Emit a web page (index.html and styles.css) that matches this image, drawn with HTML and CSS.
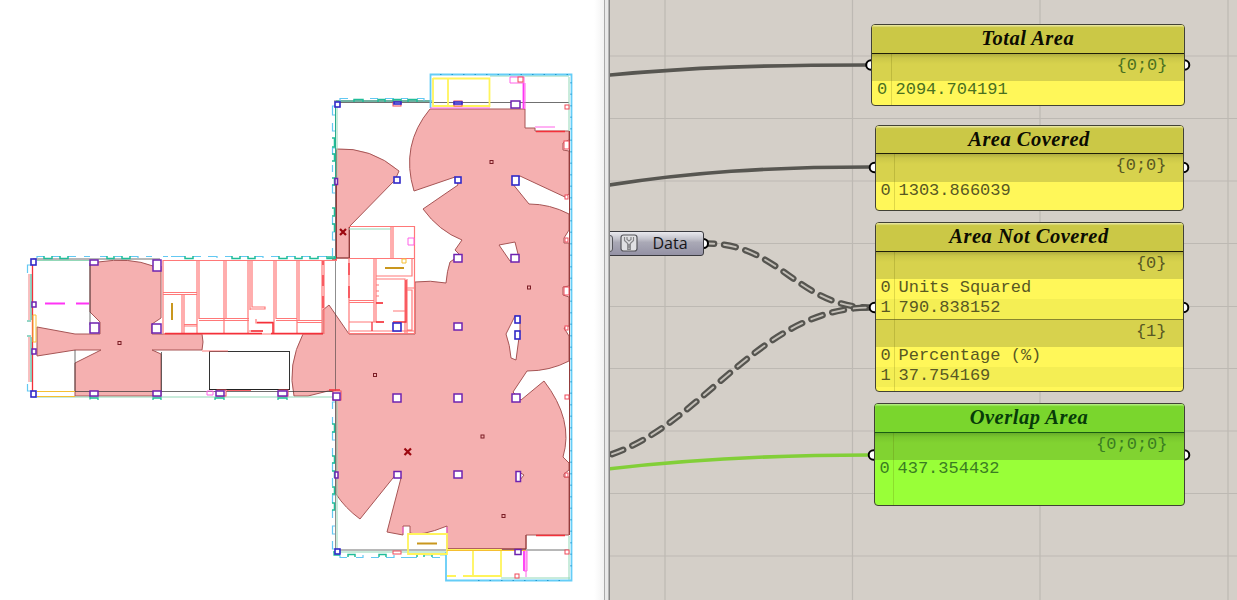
FILE: index.html
```html
<!DOCTYPE html>
<html lang="en">
<head>
<meta charset="utf-8">
<title>Area coverage</title>
<link rel="stylesheet" href="styles.css">
</head>
<body>
<main class="workspace">
<section class="plan">
<svg class="plan-drawing" viewBox="0 0 604 600" width="604" height="600">
  <!-- covered areas -->
  <g class="cover">
    <path d="M90 265L98 262Q130 257 153 266L161 266V318L152 324V334H202Q204 342 202 350H152L161 354V396H75V363L101 350H75L37 356V327L75 334H100V322L90 312Z"/>
    <path d="M336 149Q371 147 399 171L395 180L349 227V258H336Z"/>
    <path d="M303 334H323V310L329 305L349 334H415V282Q430 280 446 283Q447 271 450 262L460 255L455 250L462 240Q439 231 423 209L458 185L455 177L414 191Q400 145 430 109H525V128H535V131H569V140L563 143V150L569 151V194L565 197L520 176L512 183L529 204Q550 204 569 214V230L564 238V243H569V286L563 287V295L569 297V326L564 328L569 336V361Q550 371 527 371L513 392L521 400L544 381Q574 420 563 457L569 463V470L564 474V477H569V535H526V549H447V526Q420 537 410 533V526H403V535L387 532L401 478L397 473L360 519Q345 508 336 494V391H328L308 396H294Q287 365 303 334Z"/>
  </g>
  <g class="gap">
    <path d="M499 245L515 242L519 258L510 261Z"/>
    <path d="M515 316L506 334Q510 345 511 358L516 360L520 330V316Z"/>
    <path d="M519 472L524 475L520 480Z"/>
  </g>

  <!-- grid lines and walls -->
  <g class="wall-black">
    <path d="M336 102.500H569M75 391.500H336M336 550H569" opacity=".7"/>
    <path d="M335.500 103V551" opacity=".55"/>
    <path d="M90 263V325M75 350V391M161.500 352V391M33 259H160M334 101H430" opacity=".7"/>
    <rect x="209.500" y="351.500" width="80" height="38"/>
  </g>
  <g class="wall-maroon">
    <path d="M336.500 150V258M349.500 227V258M447 549H526M526 549V535M334 258H349M569.500 131V535"/>
  </g>
  <g class="wall-red">
    <path d="M163 260.500H337M163 334H323M163 260V333M197 260V333M199 260V319M224 260V333M226 260V319M248 260V333M250 260V310M252 260V307H265V309H250M274 260V333M276 260V319M297 260V333M299 260V320M322 260V334M324 260V334"/>
    <path d="M163 292.500H197M163 294.500H197M182 294V333M184 294V333M184 324.500H197M184 326H197M199 318.500H249M199 320.500H249M276 318.500H297M276 320.500H297M297 320.500H322M297 322.500H322M202 351H228M249 331H263M256 319V323H273V333"/>
    <path d="M349 226.500H414.500V333.500H349V258M391 227V258M393 227V258M349 258.500H414M376 258V276H412V259M374 258V322M376 276V322M376 279H405V333M407 279V333M407 288H414M407 290H412V330H407M349 300.500H374M349 302.500H374M349 322H384M376 285H379M376 291H379M376 296H379M376 303H383M393 311H405M350 331H414"/>
  </g>
  <g class="wall-strong">
    <path d="M165 333.500H262M271 333.500H323M323 261V265M323 275V286M323 296V308M349 263V275M349 286V298M406 280V322H393M372 322V331M332 259H337M257 322.500H273V334M536 131.500H565M536 535.500H565M32.500 262V392M227 390H251M329 390H340M376 303H383M376 322H384M251 331H263"/>
  </g>
  <path class="furniture-black" d="M209 389.500H290"/>
  <g class="line-green">
    <path d="M33 397H335M37 260.500H90M349 229H391M337 103V180M337 395V551M333 552H447M569 77V131M569 536V580M490 76H569M501 578H570"/>
    <path class="wall-pink" d="M29 274V320M29 337V382"/>
    <path class="line-teal" d="M31 274V320M31 337V382M27 321H31M27 336H31"/>
  </g>
  <path class="line-teal" d="M336 101H433M335.500 103V180"/>

  <!-- facade panels -->
  <g class="facade-cyan">
    <path d="M37 258V256.500H44M52 256.500H60M68 256.500H76M84 256.500H90M100 256.500H107M115 256.500H122M130 256.500H138V258M146 256.500H152M163 256.500H168M171 256.500H185M193 256.500H201M208 256.500H217V258M225 256.500H232M240 256.500H248M255 256.500H263V258M271 256.500H279M287 256.500H295M302 256.500H310M318 256.500H327"/>
    <path d="M340 101V98.500H348M370 98.500H378M385 98.500H394M401 98.500H408M417 98.500H424V101"/>
    <path d="M335 106H332.500V115H335M332.500 123V131H335M335 148H332.500V154H335M332.500 165V172M335 185H332.500V193H335M332.500 217V224H335M335 232H332.500V240H335M332.500 248V256"/>
    <path d="M335 402H332.500V409M332.500 417V424M335 432H332.500V440H335M332.500 448V456M335 463H332.500V471M332.500 478V486M335 495H332.500V503M332.500 510V518M335 526H332.500V534H335M332.500 541V549H335"/>
    <path d="M340 555V557.500H347M356 557.500H363V555M371 557.500H379M386 557.500H394V555M401 557.500H417M432 557.500H440"/>
    <path d="M31 265H27.500V273M27.500 384V391H31"/>
  </g>
  <g class="facade-teal">
    <path d="M44 256V258.500H52V256M60 256V258.500H68V256M107 256V258.500H114V256M122 256V258.500H130V256M185 256V258.500H193V256M232 256V258.500H240V256M248 256V258.500H255V256M279 256V258.500H287V256M295 256V258.500H302V256M310 256V258.500H318V256M327 256V258.500H335V256"/>
    <path d="M354 102V99.500H363V102M378 102V99.500H385V102M393 102V99.500H401V102M408 102V99.500H417V102"/>
    <path d="M332 138H334.500V147H332M332 154H334.500V161H332M332 178H334.500V185H332M332 208H334.500V216H332M332 224H334.500V232"/>
    <path d="M332 424H334.500V432H332M332 456H334.500V463H332M332 471H334.500V478M332 487H334.500V494H332M332 503H334.500V510H332"/>
    <path d="M348 557V554.500H355V557M379 557V554.500H386V557M417 554.500V557M424 557V554.500H432V557M440 554.500H446"/>
  </g>
  <g class="corner-teal">
    <path d="M90 399.500V396M90 398H98V400M153 400V398H161V400M215 400V398H224V400M278 400V398H287V400M328 257H335V259M334 551V555H340"/>
  </g>
  <path class="frame-cyan" d="M430.500 108V74.500H571.500V580.500H446V552"/>
  <path class="frame-ticks" d="M571 82V575M440 74.500H568M478 580.500H568"/>

  <g class="line-yellow">
    <path d="M433 78.500H489.500V106H433V78M448 78V106M408 534H447V554H408ZM447 550H501V576H463M473 551V576M447 576H456"/>
  </g>
  <g class="line-gold">
    <path d="M37 391.500H75M37 396.500H75M33 315V342H36V315ZM402 259H406V263H402ZM447 550.500H526"/>
    <path class="gold-bar" d="M172 303V320M385 268H404M417 543.500H437"/>
  </g>
  <g class="line-magenta">
    <path class="magenta-bar" d="M45 303.500H65M76 303.500H89M523.500 83V109M524 551V571"/>
    <path d="M510 77V83H524V77ZM524 571H527V551M525 83V109M408 238H414V245H408ZM430 108H490M535 127H555M447 527V533M207 391H213V395H207ZM403 527V533M526 550V577"/>
  </g>

  <!-- columns -->
  <g class="col-red">
    <rect x="393" y="102" width="8" height="4"/><rect x="454" y="101" width="8" height="5"/><rect x="393" y="551" width="8" height="3"/>
    <rect x="515" y="574" width="4" height="4"/><rect x="518" y="77" width="5" height="5"/>
    <rect x="565" y="105" width="4" height="4"/><rect x="564" y="141" width="5" height="8"/><rect x="565" y="195" width="3" height="4"/>
    <rect x="565" y="238" width="3" height="4"/><rect x="564" y="287" width="5" height="8"/><rect x="565" y="326" width="3" height="4"/>
    <rect x="565" y="395" width="4" height="4"/><rect x="565" y="473" width="3" height="4"/><rect x="565" y="550" width="4" height="4"/>
    <rect x="217" y="390" width="9" height="6"/><rect x="279" y="390" width="9" height="6"/><rect x="333" y="391" width="8" height="9"/>
  </g>
  <g class="col-blue">
    <rect x="31" y="259" width="5" height="6"/><rect x="31" y="391" width="5" height="6"/>
    <rect x="335" y="102" width="5" height="5"/><rect x="335" y="549" width="5" height="5"/>
    <rect x="394" y="177" width="6" height="6"/><rect x="455" y="177" width="6" height="6"/><rect x="512" y="176" width="7" height="9"/>
    <rect x="393" y="323" width="8" height="8"/><rect x="515" y="316" width="5" height="7"/><rect x="515" y="331" width="5" height="8"/>
    <rect x="454" y="102" width="8" height="2"/><rect x="394" y="102" width="7" height="2"/>
  </g>
  <g class="col-purple">
    <rect x="90" y="260" width="8" height="5"/><rect x="153" y="260" width="8" height="11"/>
    <rect x="90" y="323" width="9" height="10"/><rect x="152" y="324" width="9" height="9"/>
    <rect x="32" y="302" width="4" height="5"/><rect x="32" y="349" width="4" height="5"/>
    <rect x="90" y="391" width="8" height="5"/><rect x="153" y="391" width="8" height="5"/>
    <rect x="216" y="391" width="8" height="5"/><rect x="278" y="391" width="9" height="5"/>
    <rect x="333" y="393" width="7" height="7"/>
    <rect x="454" y="254.500" width="8" height="7.500"/><rect x="511" y="254.500" width="8" height="7.500"/>
    <rect x="454" y="323" width="8" height="7"/><rect x="393" y="394" width="8" height="8"/>
    <rect x="454" y="394" width="8" height="8"/><rect x="512" y="394" width="8" height="8"/>
    <rect x="394" y="471.500" width="7" height="6.500"/><rect x="454" y="471" width="8" height="7"/><rect x="516" y="471.500" width="4.500" height="10"/>
    <rect x="511" y="101" width="9" height="7"/><rect x="515" y="549.500" width="6" height="5"/>
    <rect x="335" y="178.500" width="2.500" height="6"/><rect x="335" y="472" width="3" height="6"/>
  </g>

  <!-- sensors and entry points -->
  <g class="sensor">
    <rect x="118" y="341.500" width="3" height="3"/><rect x="490" y="160.500" width="3" height="3"/><rect x="527.500" y="286" width="3" height="3"/>
    <rect x="373.500" y="373.500" width="3" height="3"/><rect x="481" y="435" width="3" height="3"/><rect x="502" y="514.500" width="3" height="3"/>
  </g>
  <path class="entry" d="M340 229L346 235M346 229L340 235M404.500 448.500L411 455M411 448.500L404.500 455"/>
</svg>
</section>
<div class="splitter"></div>

<section class="canvas">
<svg class="wires" viewBox="610 0 627 600" width="627" height="600">
  <path class="grid" d="M665 0V600M852.500 0V600M1040 0V600M1228 0V600M610 56H1237M610 118.500H1237M610 181H1237M610 243.500H1237M610 306.500H1237M610 368.500H1237M610 431H1237M610 493.500H1237M610 556H1237"/>
  <path class="wire" d="M600 76C690 67 770 65 868 65"/>
  <path class="wire" d="M600 186.500C690 172 770 167 870 167"/>
  <path class="wire wire-green" d="M600 470C690 459 770 455 870 455"/>
  <path class="tube" stroke-dashoffset="5" d="M707 243.500C780 243.500 798 307.500 871 307.500"/>
  <path class="tube-core" stroke-dashoffset="5" d="M707 243.500C780 243.500 798 307.500 871 307.500"/>
  <path class="tube" stroke-dashoffset="13" d="M560 463C690 463 741 307.500 871 307.500"/>
  <path class="tube-core" stroke-dashoffset="13" d="M560 463C690 463 741 307.500 871 307.500"/>
  <g class="port">
    <circle cx="703.500" cy="243.500" r="4.500"/>
    <circle cx="871" cy="65" r="4.800"/><circle cx="1184.500" cy="65" r="4.800"/>
    <circle cx="874.500" cy="167.500" r="4.800"/><circle cx="1183.500" cy="167.500" r="4.800"/>
    <circle cx="874.500" cy="307.500" r="4.800"/><circle cx="1183.500" cy="307.500" r="4.800"/>
    <circle cx="873.500" cy="455" r="4.800"/><circle cx="1184.500" cy="455" r="4.800"/>
  </g>
</svg>

<div class="component">
  <span class="badge badge-cut"></span>
  <svg class="badge-icon" viewBox="0 0 18 18" width="18" height="18"><rect x="1" y="1" width="16" height="16" rx="2.500"/><path class="wrench" d="M4.500 3V6.500L7.700 9.500V15.500H10.300V9.500L13.500 6.500V3M7 3V5.500L9 7L11 5.500V3M9 10V14.500"/></svg>
  <span class="component-label">Data</span>
</div>

<article class="panel panel-total">
  <h2 class="title">Total Area</h2>
  <div class="rows"><div class="path">{0;0}</div><div class="row"><span class="idx">0</span><span>2094.704191</span></div></div>
</article>
<article class="panel panel-covered">
  <h2 class="title">Area Covered</h2>
  <div class="rows"><div class="path">{0;0}</div><div class="row"><span class="idx">0</span><span>1303.866039</span></div></div>
</article>
<article class="panel panel-uncovered">
  <h2 class="title">Area Not Covered</h2>
  <div class="rows">
    <div class="path">{0}</div>
    <div class="row"><span class="idx">0</span><span>Units Squared</span></div>
    <div class="row row-alt"><span class="idx">1</span><span>790.838152</span></div>
    <div class="path path-next">{1}</div>
    <div class="row"><span class="idx">0</span><span>Percentage (%)</span></div>
    <div class="row row-alt"><span class="idx">1</span><span>37.754169</span></div>
  </div>
</article>
<article class="panel panel-overlap">
  <h2 class="title">Overlap Area</h2>
  <div class="rows"><div class="path">{0;0;0}</div><div class="row"><span class="idx">0</span><span>437.354432</span></div></div>
</article>
</section>
</main>
</body>
</html>
```
FILE: styles.css
```css
* { box-sizing: border-box; }
body { margin: 0; background: #fff; overflow: hidden; }
.workspace { display: flex; width: 1237px; height: 600px; }
.plan { width: 604px; background: linear-gradient(90deg, #fff 594px, #f3f3f3); }
.plan-drawing, .wires { display: block; }
.splitter { width: 6px; background: linear-gradient(90deg, #aaa 0 1px, #e9e9e9 1px 4px, #b5b5b5 4px 5px, #858585 5px); }
.canvas { position: relative; width: 627px; height: 600px; overflow: hidden; background: #d4cfc8; }

.plan-drawing path, .plan-drawing rect { fill: none; stroke-width: 1; }
.plan-drawing .cover path { fill: #f5b0b0; stroke: #a65555; }
.plan-drawing .gap path { fill: #fff; stroke: #a65555; }
.wall-black { stroke: #333; }
.wall-maroon { stroke: #943c3c; }
.plan-drawing .wall-red path { stroke: #ff7878; stroke-width: 1.2; }
.plan-drawing .wall-strong path { stroke: #f4303a; stroke-width: 1.3; }
.wall-pink { stroke: #f08080; }
.furniture-black { stroke: #222; }
.line-green { stroke: #93d8b8; }
.line-teal { stroke: #28ac8c; }
.plan-drawing .facade-cyan path { stroke: #62c8f2; stroke-width: 1.2; }
.plan-drawing .facade-teal path { stroke: #20bd98; stroke-width: 1.5; }
.plan-drawing .corner-teal path { stroke: #20bd98; stroke-width: 1.3; }
.plan-drawing .frame-cyan { stroke: #65cdf7; stroke-width: 1.8; }
.plan-drawing .frame-ticks { stroke: #239bd0; stroke-width: 1; stroke-dasharray: 1.5 10; }
.plan-drawing .line-yellow path { stroke: #fff45c; stroke-width: 1.8; }
.line-gold { stroke: #f5bf32; }
.plan-drawing .gold-bar { stroke: #c9971e; stroke-width: 2; }
.line-magenta { stroke: #ff62e8; }
.plan-drawing .magenta-bar { stroke: #ff35f5; stroke-width: 1.8; }
.plan-drawing .col-blue rect { stroke: #3028c8; stroke-width: 1.6; fill: #fff; }
.plan-drawing .col-purple rect { stroke: #6e22b0; stroke-width: 1.5; fill: #fff; }
.plan-drawing .col-red rect { stroke: #f04858; fill: #fff; }
.plan-drawing .sensor rect { stroke: #7b1d25; }
.plan-drawing .entry { stroke: #9c0810; stroke-width: 2.2; }

.wires path { fill: none; }
.wires .grid { stroke: #bdb9b3; stroke-width: 1.2; }
.wires .wire { stroke: #575651; stroke-width: 3.6; }
.wires .wire-green { stroke: #82cf38; }
.wires .tube { stroke: #565550; stroke-width: 6.4; stroke-linecap: round; stroke-dasharray: 12 10; }
.wires .tube-core { stroke: #c4c0b9; stroke-width: 1.9; stroke-linecap: round; stroke-dasharray: 12 10; }
.port { fill: #fff; stroke: #000; stroke-width: 2; }

.component { position: absolute; left: -10px; top: 230.5px; width: 104px; height: 25.5px; display: flex; align-items: center; border: 1.5px solid #3b3b40; border-radius: 3px; background: linear-gradient(#e9e9ee 0, #c3c3cc 30%, #aaa9b6 45%, #9492a5 100%); }
.badge-cut { width: 12px; height: 17px; border: 1px solid #55555b; border-radius: 3px; background: #cbcbd0; }
.badge-icon { margin-left: 7px; fill: #e0e0e3; stroke: #56565b; stroke-width: 1.2; }
.wrench { fill: none; stroke: #858588; }
.component-label { margin-left: 14.500px; font: 16px/22px "Open Sans", sans-serif; color: #161618; }

.panel { position: absolute; display: flex; flex-direction: column; overflow: hidden; border: 1.5px solid #414136; border-radius: 4px; background: #fff759; color: #585823; }
.title { flex: none; height: 28.5px; margin: 0; border-bottom: 1.5px solid #1e1e08; background: #cbc846; box-shadow: inset 0 1.5px 1px #e8e6a0; font: italic bold 20.5px/26px "Liberation Serif", serif; letter-spacing: 0.5px; text-align: center; color: #0c0c02; }
.rows { position: relative; flex: 1; font: 17px/20px "Liberation Mono", monospace; }
.rows::after { content: ""; position: absolute; left: 18.500px; top: 0; bottom: 0; width: 1px; background: rgba(90, 90, 0, .2); }
.path { height: 27.5px; padding-right: 16px; line-height: 24px; text-align: right; background: linear-gradient(#afac3f 0, #cbc748 4px, #d7d24d 10px); }
.path-next { border-top: 1px solid #88852e; background: #d7d24d; }
.row { display: flex; height: 20px; line-height: 17px; }
.row-alt { background: #f4ee54; }
.idx { width: 23px; padding-left: 5px; }
.panel-total { left: 261px; top: 24px; width: 313.500px; height: 82px; color: #4a701f; }
.panel-total .idx { width: 23.500px; }
.panel-covered { left: 264.500px; top: 124.500px; width: 309px; height: 86.500px; }
.panel-uncovered { left: 264.500px; top: 222px; width: 309px; height: 170px; }
.panel-overlap { left: 263.500px; top: 403px; width: 311px; height: 103px; background: #99ff38; color: #3a7d22; }
.panel-overlap .title { background: #7ad62d; color: #073b09; border-bottom-color: #195d12; box-shadow: inset 0 1.5px 1px #b4ed80; }
.panel-overlap .path { background: linear-gradient(#68ad28 0, #79c72e 4px, #81d331 10px); }
```
